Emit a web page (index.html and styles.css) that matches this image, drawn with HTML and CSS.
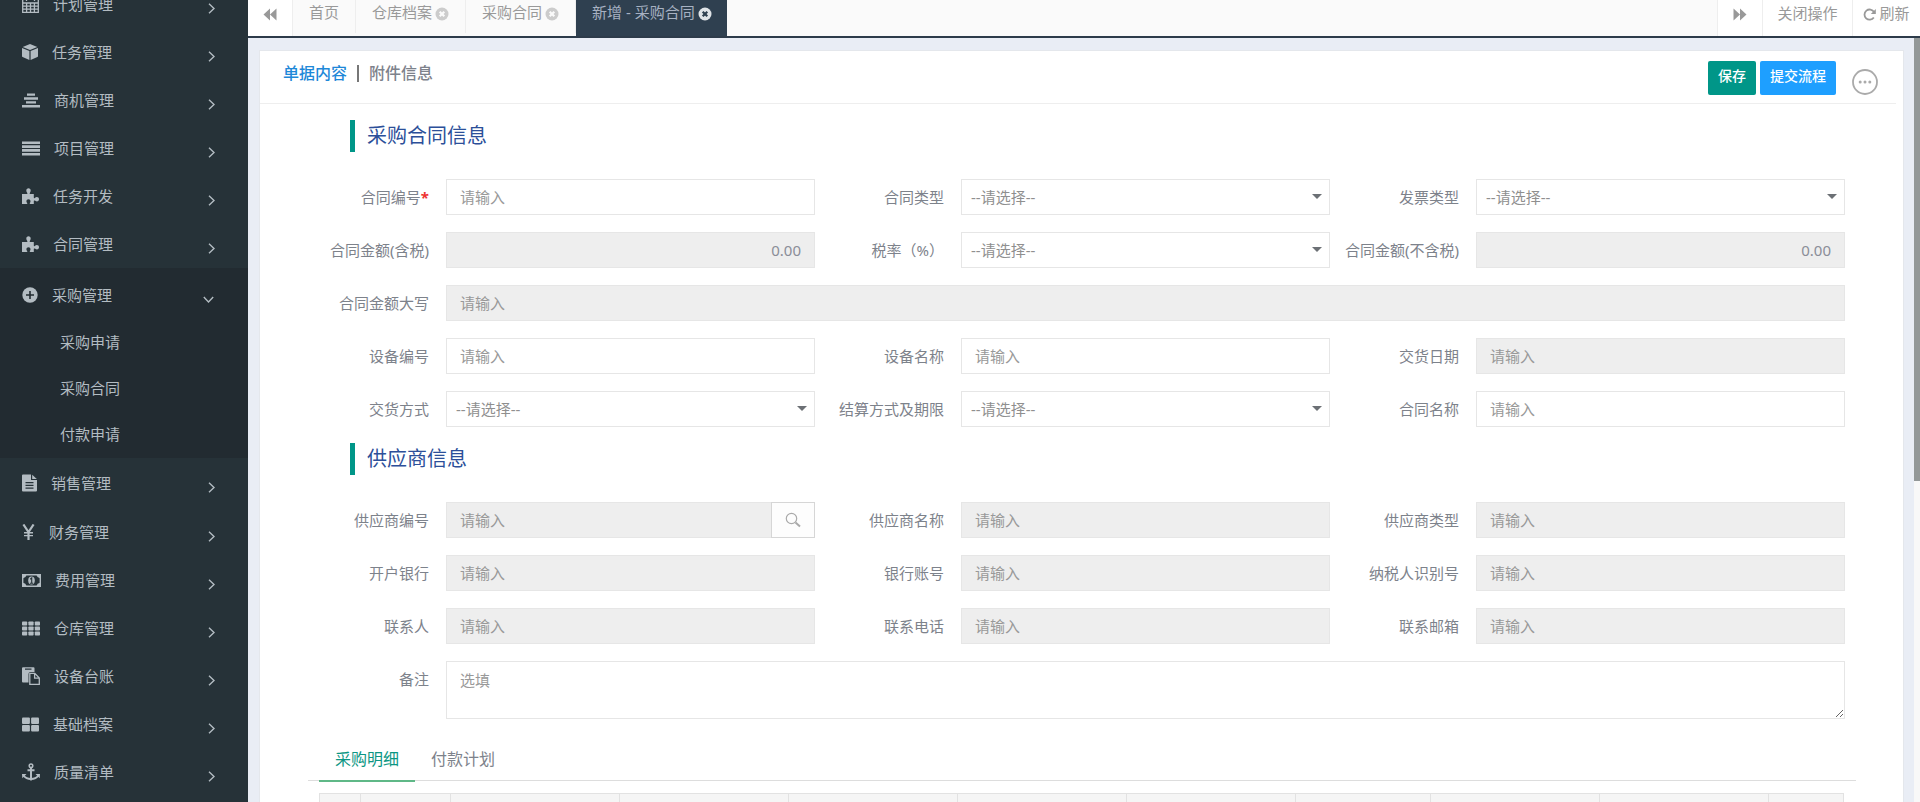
FILE: index.html
```html
<!DOCTYPE html>
<html lang="zh-CN">
<head>
<meta charset="utf-8">
<title>新增 - 采购合同</title>
<link rel="stylesheet" href="styles.css">
</head>
<body>
<svg class="defs" aria-hidden="true">
  <symbol id="chev" viewBox="0 0 7 11"><path d="M1 .8 6 5.500 1 10.200" fill="none" stroke="currentColor" stroke-width="1.400"/></symbol>
  <symbol id="close" viewBox="0 0 14 14"><circle cx="7" cy="7" r="6.500" fill="currentColor"/><path d="m4.700 4.700 4.600 4.600m0-4.600-4.600 4.600" fill="none" stroke="var(--cross)" stroke-width="2.200"/></symbol>
  <symbol id="puzzle" viewBox="0 0 17 17"><path fill="currentColor" d="M0 6h4.800c.5 0 .8-.4.5-1C4.600 4.100 4.300 3.500 4.300 2.600 4.300 1.200 5.200.3 6.500.3s2.200.9 2.200 2.300c0 .9-.4 1.500-.9 2.400-.3.600 0 1 .5 1h3.500v3.600c0 .6.500.8 1 .4.700-.6 1.300-.9 2-.9 1.300 0 2.200.8 2.200 2.100 0 1.400-.9 2.200-2.200 2.200-.8 0-1.300-.3-2-.8-.5-.4-1-.2-1 .4V16H8.300c-.6 0-.8-.4-.5-.9.500-.7.700-1.100.7-1.900 0-1.200-.8-2-2-2s-2.100.8-2.100 2c0 .8.300 1.300.8 1.900.300.500.1.900-.5.900H0z"/></symbol>
</svg>
<div class="app">
  <nav class="side">
    <a class="item" href="#"><svg width="17" height="17" viewBox="0 0 17 17"><path fill="none" stroke="currentColor" stroke-width="1.300" d="M.7 3h15.600v13.300H.7zM.7 7h15.600M.7 10.100h15.600M.7 13.200h15.600M4.600 7v9M8.500 7v9M12.400 7v9M4.500 1v4M12.500 1v4"/></svg><span>计划管理</span><svg class="chev"><use href="#chev"/></svg></a>
    <a class="item" href="#"><svg width="16" height="16" viewBox="0 0 16 16"><path fill="currentColor" d="M8 0l7.300 2.900L8 6 .7 2.900zM0 4l7.400 3.100V16L.6 13.100Q0 12.800 0 12zM16 4 8.600 7.100V16l6.800-2.900q.6-.3.600-1.100z"/></svg><span>任务管理</span><svg class="chev"><use href="#chev"/></svg></a>
    <a class="item" href="#"><svg width="18" height="15" viewBox="0 0 18 15"><path fill="currentColor" d="M5 .5h8v2.300H5zM2 4.300h14v2.500H2zM4 8.300h10v2.300H4zM0 12.100h18v2.500H0z"/></svg><span>商机管理</span><svg class="chev"><use href="#chev"/></svg></a>
    <a class="item" href="#"><svg width="18" height="15" viewBox="0 0 18 15"><path fill="currentColor" d="M0 .5h18v2.600H0zM0 4.300h18v2.600H0zM0 8.100h18v2.600H0zM0 11.900h18v2.600H0z"/></svg><span>项目管理</span><svg class="chev"><use href="#chev"/></svg></a>
    <a class="item" href="#"><svg width="17" height="17"><use href="#puzzle"/></svg><span>任务开发</span><svg class="chev"><use href="#chev"/></svg></a>
    <a class="item" href="#"><svg width="17" height="17"><use href="#puzzle"/></svg><span>合同管理</span><svg class="chev"><use href="#chev"/></svg></a>
    <div class="group">
      <a class="item" href="#"><svg width="16" height="16" viewBox="0 0 16 16"><circle cx="8" cy="8" r="7.700" fill="currentColor"/><path d="M8 4v8M4 8h8" stroke="#222b31" stroke-width="1.600"/></svg><span>采购管理</span><svg class="chev open"><use href="#chev"/></svg></a>
      <a class="sub" href="#">采购申请</a>
      <a class="sub" href="#">采购合同</a>
      <a class="sub" href="#">付款申请</a>
    </div>
    <a class="item tall" href="#"><svg width="15" height="18" viewBox="0 0 15 18"><path fill="currentColor" fill-rule="evenodd" d="M1 .5h8v5.500h6v10.500q0 1-1 1H1q-1 0-1-1v-15q0-1 1-1zM3.500 8v1.200h8V8zm0 2.800V12h8v-1.200zm0 2.800v1.200h8v-1.200z"/><path fill="currentColor" d="M10.200.7 14.800 5h-4.600z"/></svg><span>销售管理</span><svg class="chev"><use href="#chev"/></svg></a>
    <a class="item" href="#"><svg width="13" height="16" viewBox="0 0 13 16"><path fill="none" stroke="currentColor" stroke-width="2.200" d="M1.400.5l5.100 7.500L11.600.5M6.500 7.500V16"/><path stroke="currentColor" stroke-width="1.400" d="M2 8.700h9M2 11.600h9"/></svg><span>财务管理</span><svg class="chev"><use href="#chev"/></svg></a>
    <a class="item" href="#"><svg width="19" height="13" viewBox="0 0 19 13"><path fill="none" stroke="currentColor" stroke-width="1.400" d="M.7.7h17.600v11.600H.7z"/><path fill="currentColor" d="M1 1h3.500Q4 3.800 1 4.300zM18 1h-3.500q.5 2.800 3.500 3.300zM1 12h3.500Q4 9.200 1 8.700zM18 12h-3.500q.5-2.800 3.500-3.300z"/><ellipse cx="9.500" cy="6.500" rx="3.300" ry="4" fill="currentColor"/><path d="M8.200 5.200 9.700 4v5M8 9.200h3.200" fill="none" stroke="#263238" stroke-width="1.100"/></svg><span>费用管理</span><svg class="chev"><use href="#chev"/></svg></a>
    <a class="item" href="#"><svg width="18" height="15" viewBox="0 0 18 15"><g fill="currentColor"><rect y=".5" width="5.200" height="4" rx=".8"/><rect x="6.400" y=".5" width="5.200" height="4" rx=".8"/><rect x="12.800" y=".5" width="5.200" height="4" rx=".8"/><rect y="5.500" width="5.200" height="4" rx=".8"/><rect x="6.400" y="5.500" width="5.200" height="4" rx=".8"/><rect x="12.800" y="5.500" width="5.200" height="4" rx=".8"/><rect y="10.500" width="5.200" height="4" rx=".8"/><rect x="6.400" y="10.500" width="5.200" height="4" rx=".8"/><rect x="12.800" y="10.500" width="5.200" height="4" rx=".8"/></g></svg><span>仓库管理</span><svg class="chev"><use href="#chev"/></svg></a>
    <a class="item" href="#"><svg width="18" height="18" viewBox="0 0 18 18"><path fill="currentColor" fill-rule="evenodd" d="M1 .3h10.500q1 0 1 1V5H8.500Q6.500 5 6.500 7v8.500H1q-1 0-1-1V1.300q0-1 1-1zM3 1.500v1.200h6.500V1.500z"/><path fill="none" stroke="currentColor" stroke-width="1.300" d="M7.800 6.300h5L17.300 11v6.300H7.800zM12.600 6.500v4.700h4.500"/></svg><span>设备台账</span><svg class="chev"><use href="#chev"/></svg></a>
    <a class="item" href="#"><svg width="17" height="15" viewBox="0 0 17 15"><g fill="currentColor"><rect y=".5" width="7.900" height="6.400" rx="1"/><rect x="9.100" y=".5" width="7.900" height="6.400" rx="1"/><rect y="8.100" width="7.900" height="6.400" rx="1"/><rect x="9.100" y="8.100" width="7.900" height="6.400" rx="1"/></g></svg><span>基础档案</span><svg class="chev"><use href="#chev"/></svg></a>
    <a class="item" href="#"><svg width="18" height="18" viewBox="0 0 18 18"><circle cx="9" cy="2.700" r="1.800" fill="none" stroke="currentColor" stroke-width="1.500"/><path fill="none" stroke="currentColor" stroke-width="2" d="M9 4.500V16M5.500 7.300h7M1.800 12.800Q4 16 9 16t7.200-3.200"/><path fill="currentColor" d="M0 11h4.500L.3 15.300zM18 11h-4.500l4.200 4.300zM6.800 15.500 9 18l2.200-2.500z"/></svg><span>质量清单</span><svg class="chev"><use href="#chev"/></svg></a>
  </nav>

  <div class="main">
    <header class="tabs">
      <button class="tool" type="button" aria-label="向左"><svg width="14" height="13" viewBox="0 0 14 13"><path fill="currentColor" d="M7 .5v12l-6.500-6zM13.500.5v12L7 6.500z"/></svg></button>
      <a class="tab" href="#">首页</a>
      <a class="tab" href="#">仓库档案<svg class="x"><use href="#close"/></svg></a>
      <a class="tab" href="#">采购合同<svg class="x"><use href="#close"/></svg></a>
      <a class="tab on" href="#">新增 - 采购合同<svg class="x"><use href="#close"/></svg></a>
      <span class="fill"></span>
      <button class="tool" type="button" aria-label="向右"><svg width="14" height="13" viewBox="0 0 14 13"><path fill="currentColor" d="M.5.5v12L7 6.500zM7 .5v12l6.500-6z"/></svg></button>
      <button class="tool wide" type="button">关闭操作</button>
      <button class="tool fresh" type="button"><svg width="13" height="13" viewBox="0 0 13 13"><path fill="none" stroke="currentColor" stroke-width="1.800" d="M10.800 9.500A5.100 5.100 0 1 1 11 4"/><path fill="currentColor" d="M12.800 1v5H7.800z"/></svg>刷新</button>
    </header>

    <div class="body">
      <main class="card">
        <div class="head">
          <div class="switch"><a class="cur" href="#">单据内容</a><span class="sep"></span><a href="#">附件信息</a></div>
          <button class="btn save" type="button">保存</button>
          <button class="btn send" type="button">提交流程</button>
          <button class="more" type="button" aria-label="更多"><svg width="26" height="26" viewBox="0 0 26 26"><circle cx="13" cy="13" r="12" fill="none" stroke="currentColor" stroke-width="1.800"/><g fill="currentColor"><circle cx="8.200" cy="13" r="1.500"/><circle cx="13" cy="13" r="1.500"/><circle cx="17.800" cy="13" r="1.500"/></g></svg></button>
        </div>

        <form class="form">
          <h2 class="title">采购合同信息</h2>
          <div class="grid">
            <label for="f1">合同编号<b class="req">*</b></label><input id="f1" type="text" placeholder="请输入">
            <label for="f2">合同类型</label><div class="select"><select id="f2"><option>--请选择--</option></select></div>
            <label for="f3">发票类型</label><div class="select"><select id="f3"><option>--请选择--</option></select></div>
            <label for="f4">合同金额(含税)</label><input id="f4" class="num" type="text" value="0.00" readonly>
            <label for="f5">税率（%）</label><div class="select"><select id="f5"><option>--请选择--</option></select></div>
            <label for="f6">合同金额(不含税)</label><input id="f6" class="num" type="text" value="0.00" readonly>
            <label for="f7">合同金额大写</label><input id="f7" class="span" type="text" placeholder="请输入" readonly>
            <label for="f8">设备编号</label><input id="f8" type="text" placeholder="请输入">
            <label for="f9">设备名称</label><input id="f9" type="text" placeholder="请输入">
            <label for="f10">交货日期</label><input id="f10" type="text" placeholder="请输入" readonly>
            <label for="f11">交货方式</label><div class="select"><select id="f11"><option>--请选择--</option></select></div>
            <label for="f12">结算方式及期限</label><div class="select"><select id="f12"><option>--请选择--</option></select></div>
            <label for="f13">合同名称</label><input id="f13" type="text" placeholder="请输入">
          </div>

          <h2 class="title">供应商信息</h2>
          <div class="grid">
            <label for="g1">供应商编号</label><div class="lookup"><input id="g1" type="text" placeholder="请输入" readonly><button type="button" aria-label="查询"><svg width="16" height="16" viewBox="0 0 16 16"><circle cx="6.500" cy="6.500" r="5.200" fill="none" stroke="currentColor" stroke-width="1.200"/><path d="m10.500 10.500 4.500 4" stroke="currentColor" stroke-width="2"/></svg></button></div>
            <label for="g2">供应商名称</label><input id="g2" type="text" placeholder="请输入" readonly>
            <label for="g3">供应商类型</label><input id="g3" type="text" placeholder="请输入" readonly>
            <label for="g4">开户银行</label><input id="g4" type="text" placeholder="请输入" readonly>
            <label for="g5">银行账号</label><input id="g5" type="text" placeholder="请输入" readonly>
            <label for="g6">纳税人识别号</label><input id="g6" type="text" placeholder="请输入" readonly>
            <label for="g7">联系人</label><input id="g7" type="text" placeholder="请输入" readonly>
            <label for="g8">联系电话</label><input id="g8" type="text" placeholder="请输入" readonly>
            <label for="g9">联系邮箱</label><input id="g9" type="text" placeholder="请输入" readonly>
            <label for="g10">备注</label><textarea id="g10" class="span" placeholder="选填"></textarea>
          </div>
        </form>

        <div class="subtabs"><a class="cur" href="#">采购明细</a><a href="#">付款计划</a></div>
        <table class="lines">
          <thead><tr><th class="c-no"></th><th class="c-op"></th><th class="c-md"></th><th class="c-md"></th><th class="c-md"></th><th class="c-md"></th><th class="c-md"></th><th class="c-sm"></th><th class="c-md"></th><th class="c-md"></th><th></th></tr></thead>
        </table>
      </main>
      <div class="track"><div class="thumb"></div></div>
    </div>
  </div>
</div>
</body>
</html>
```
FILE: styles.css
```css
* { box-sizing: border-box; }
html, body { height: 100%; }
body {
  margin: 0;
  overflow: hidden;
  font: 15px/24px "Noto Sans", "Noto Sans CJK SC", sans-serif;
  color: #7d828b;
  background: #e9edf5;
}
a { color: inherit; text-decoration: none; }
button, input, select, textarea { font: inherit; color: inherit; margin: 0; border-radius: 0; }
button { cursor: pointer; }
svg { display: block; flex: none; }
.defs { position: absolute; width: 0; height: 0; }

.app { display: flex; height: 100vh; }

/* sidebar, scrolled slightly past its first entry */
.side {
  flex: none;
  width: 248px;
  overflow: hidden;
  background: #263238;
  color: #b3bcc2;
}
.side > .item:first-child { margin-top: -20px; }
.item { display: flex; align-items: center; gap: 14px; height: 48px; padding: 0 33px 0 22px; }
.item.tall { height: 50px; }
.item span { flex: 1; }
.chev { width: 7px; height: 11px; margin-top: 8px; }
.chev.open { transform: rotate(90deg); margin-right: 3px; }
.group { padding: 3px 0 1px; background: #222b31; }
.sub { display: block; height: 46px; padding-left: 60px; line-height: 46px; }

.main { flex: 1; min-width: 0; display: flex; flex-direction: column; }

/* page tabs */
.tabs {
  display: flex;
  align-items: flex-start;
  flex: none;
  height: 38px;
  border-bottom: 2px solid #2d3b4a;
  background: #fafafa;
  color: #999;
}
.tab {
  --cross: #fafafa;
  display: flex;
  align-items: flex-start;
  gap: 3px;
  height: 33px;
  padding: 0 16px;
  border-right: 1px solid #eee;
  line-height: 24px;
}
.tab.on { --cross: #2f4050; height: 36px; padding-right: 14px; background: #2f4050; border-color: #2f4050; color: #a7b1c2; }
.x { width: 14px; height: 14px; margin-top: 7px; color: #ccc; }
.on .x { color: #e0e4e8; }
.fill { flex: 1; }
.tool {
  display: flex;
  justify-content: center;
  gap: 3px;
  width: 45px;
  height: 36px;
  padding: 0;
  border: 0;
  border-left: 1px solid #eee;
  background: #fff;
  line-height: 28px;
}
.tool:first-child { border-left: 0; border-right: 1px solid #eee; }
.tool svg { margin-top: 8px; }
.tool.wide { width: 90px; line-height: 26px; }
.tool.fresh { width: 68px; line-height: 26px; }

/* document card */
.body { flex: 1; min-height: 0; display: flex; align-items: stretch; }
.card {
  flex: 1;
  min-width: 0;
  overflow: hidden;
  margin: 12px 10px 0 11px;
  border: 1px solid #e4e7ec;
  border-bottom: 0;
  background: #fff;
}
.track { flex: none; width: 6px; background: #f8f8f8; }
.thumb { height: 58%; background: #939898; }

.head {
  display: flex;
  align-items: flex-start;
  margin: 0 7px 0 0;
  padding: 10px 18px 8px 23px;
  border-bottom: 1px solid #eee;
}
.switch { flex: 1; display: flex; align-items: center; font-size: 16px; font-weight: 500; }
.switch .cur { color: #1e88d8; }
.sep { width: 2px; height: 17px; margin: 0 10px; background: #777; }
.btn { height: 34px; padding: 0 10px 4px; border: 0; border-radius: 2px; color: #fff; font-size: 14px; line-height: 30px; font-weight: 500; }
.save { background: #009688; margin-right: 4px; }
.send { background: #1e9fff; }
.more { align-self: flex-end; margin-left: 16px; padding: 0; border: 0; background: none; color: #aaa; }

.form { padding: 0 58px 0 40px; }
.title {
  margin: 16px 0 27px 50px;
  padding-left: 12px;
  border-left: 5px solid #009688;
  font-size: 20px;
  line-height: 32px;
  font-weight: 400;
  color: #2c4f99;
}
.grid { display: grid; grid-template-columns: repeat(3, 146px minmax(0, 1fr)); row-gap: 17px; }
.grid label { padding-right: 17px; line-height: 36px; text-align: right; white-space: nowrap; }
.req { color: #e33; }
.span { grid-column: span 5; }
input, select, textarea {
  width: 100%;
  height: 36px;
  padding: 0 13px;
  border: 1px solid #e6e6e6;
  background: #fff;
  outline: 0;
}
input[readonly] { background: #eee; }
::placeholder { color: #999; opacity: 1; }
.num { text-align: right; color: #8a8d98; }
.select { position: relative; }
.select::after {
  content: "";
  position: absolute;
  right: 8px;
  top: 15px;
  border: 5px solid transparent;
  border-top-color: #6c7075;
  border-bottom: 0;
}
select { appearance: none; padding: 0 9px; color: #8f8f8f; }
textarea { display: block; height: 58px; padding: 6px 13px; resize: vertical; }
.lookup { display: flex; }
.lookup input { flex: 1; min-width: 0; border-right: 0; }
.lookup button {
  display: flex;
  align-items: center;
  justify-content: center;
  width: 44px;
  padding: 0;
  border: 1px solid #d6d6d6;
  background: #fdfdfd;
  color: #aaa;
}

.subtabs {
  display: flex;
  height: 42px;
  margin: 21px 47px 0 48px;
  padding-left: 11px;
  font-size: 16px;
  line-height: 38px;
  box-shadow: inset 0 -1px #fff, inset 0 -2px #ddd;
}
.subtabs a { padding: 0 16px; }
.subtabs .cur { color: #0b9683; border-bottom: 2px solid #5fb887; }

.lines { width: calc(100% - 118px); margin: 11px 0 0 59px; border-collapse: collapse; table-layout: fixed; }
.lines th { height: 40px; padding: 0; border: 1px solid #e2e2e2; background: #f5f5f5; }
.c-no { width: 41px; }
.c-op { width: 90px; }
.c-md { width: 169px; }
.c-sm { width: 135px; }
```
